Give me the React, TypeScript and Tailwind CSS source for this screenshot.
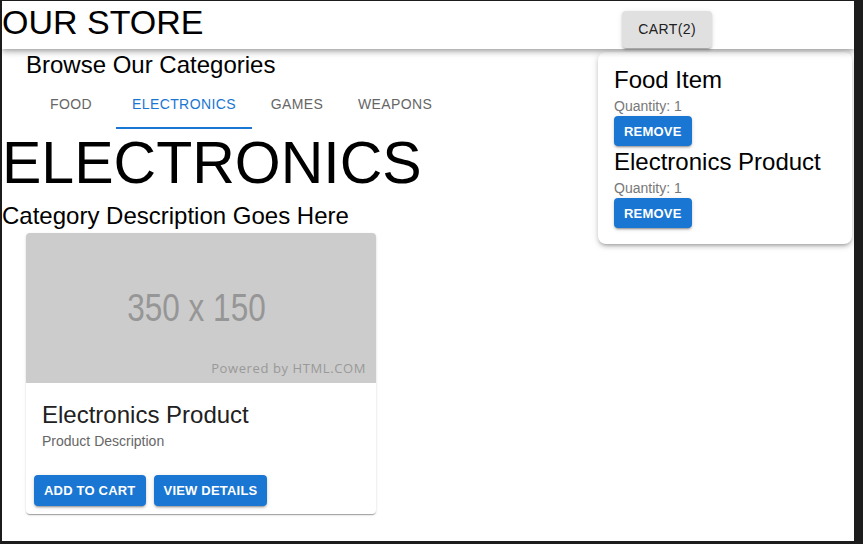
import React from "react";

const tabs = ["Food", "Electronics", "Games", "Weapons"];

const cartItems = [
  { name: "Food Item", qty: 1 },
  { name: "Electronics Product", qty: 1 },
];

const btnShadow =
  "shadow-[0px_3px_1px_-2px_rgba(0,0,0,0.2),0px_2px_2px_0px_rgba(0,0,0,0.14),0px_1px_5px_0px_rgba(0,0,0,0.12)]";

const BlueButton = ({ children, tall }: { children: React.ReactNode; tall?: boolean }) => (
  <button
    className={`${tall ? "h-[31px]" : "h-[30px]"} px-[10px] rounded bg-[#1976d2] text-white text-[13px] font-bold uppercase tracking-[0.2px] leading-none ${btnShadow}`}
  >
    {children}
  </button>
);

const ProductCard = () => (
  <div className="ml-6 mt-[1px] w-[350px] rounded bg-white overflow-hidden shadow-[0px_2px_1px_-1px_rgba(0,0,0,0.2),0px_1px_1px_0px_rgba(0,0,0,0.14),0px_1px_3px_0px_rgba(0,0,0,0.12)]">
    <div className="relative h-[150px] bg-[#cccccc] flex items-center justify-center">
      <span className="inline-block scale-x-[0.83] text-[38px] leading-none text-[#969696] -ml-[10px]">
        350 x 150
      </span>
      <span
        className="absolute right-[10px] bottom-[8px] text-[13px] leading-none tracking-[0.6px] text-[#999999]"
        style={{ fontFamily: '"Open Sans", sans-serif' }}
      >
        Powered by HTML.COM
      </span>
    </div>
    <div className="p-4">
      <h5 className="text-[24px] leading-8 text-[#212121]">Electronics Product</h5>
      <p className="text-[14px] leading-5 text-[#666666]">Product Description</p>
    </div>
    <div className="flex gap-2 p-2">
      <BlueButton tall>Add to cart</BlueButton>
      <BlueButton tall>View details</BlueButton>
    </div>
  </div>
);

export default function App() {
  return (
    <div
      className="w-[863px] h-[544px] bg-[#1c1c1c] pl-[2px] pt-[1px] pr-[9px] pb-[3px]"
      style={{ fontFamily: '"Liberation Sans", Arial, sans-serif' }}
    >
      <div className="relative h-full bg-white overflow-hidden">
        <header className="relative z-10 h-[48px] flex items-start justify-between pr-[142px] bg-white shadow-[0px_2px_4px_-1px_rgba(0,0,0,0.2),0px_4px_5px_0px_rgba(0,0,0,0.14),0px_1px_10px_0px_rgba(0,0,0,0.12)]">
          <h4 className="text-[34px] leading-[42px] text-black">OUR STORE</h4>
          <button
            className={`mt-[10px] h-[37px] px-4 rounded bg-[#e0e0e0] text-[14px] tracking-[0.4px] text-[#212121] ${btnShadow}`}
          >
            CART(2)
          </button>
        </header>

        <main>
          <h5 className="pl-6 text-[24px] leading-8 text-black">Browse Our Categories</h5>
          <nav className="pl-6 flex h-[48px]">
            {tabs.map((t) => {
              const active = t === "Electronics";
              return (
                <div
                  key={t}
                  className={`min-w-[90px] px-4 pb-[1px] flex items-center justify-center text-[14px] uppercase tracking-[0.4px] ${
                    active ? "text-[#1976d2] shadow-[inset_0_-2px_0_#1976d2]" : "text-[#666666]"
                  }`}
                >
                  {t}
                </div>
              );
            })}
          </nav>
          <h2 className="text-[59px] leading-[68px] text-black">ELECTRONICS</h2>
          <p className="mt-[3px] text-[24px] leading-8 text-black">Category Description Goes Here</p>
          <ProductCard />
        </main>

        <aside className="absolute left-[596px] top-[51px] w-[254px] rounded-lg bg-white pt-3 px-4 pb-4 shadow-[0px_3px_3px_-2px_rgba(0,0,0,0.2),0px_3px_4px_0px_rgba(0,0,0,0.14),0px_1px_8px_0px_rgba(0,0,0,0.12)]">
          {cartItems.map((item) => (
            <div key={item.name}>
              <h5 className="text-[24px] leading-8 text-black">{item.name}</h5>
              <p className="text-[14px] leading-5 text-[#777777]">Quantity: {item.qty}</p>
              <BlueButton>Remove</BlueButton>
            </div>
          ))}
        </aside>
      </div>
    </div>
  );
}
